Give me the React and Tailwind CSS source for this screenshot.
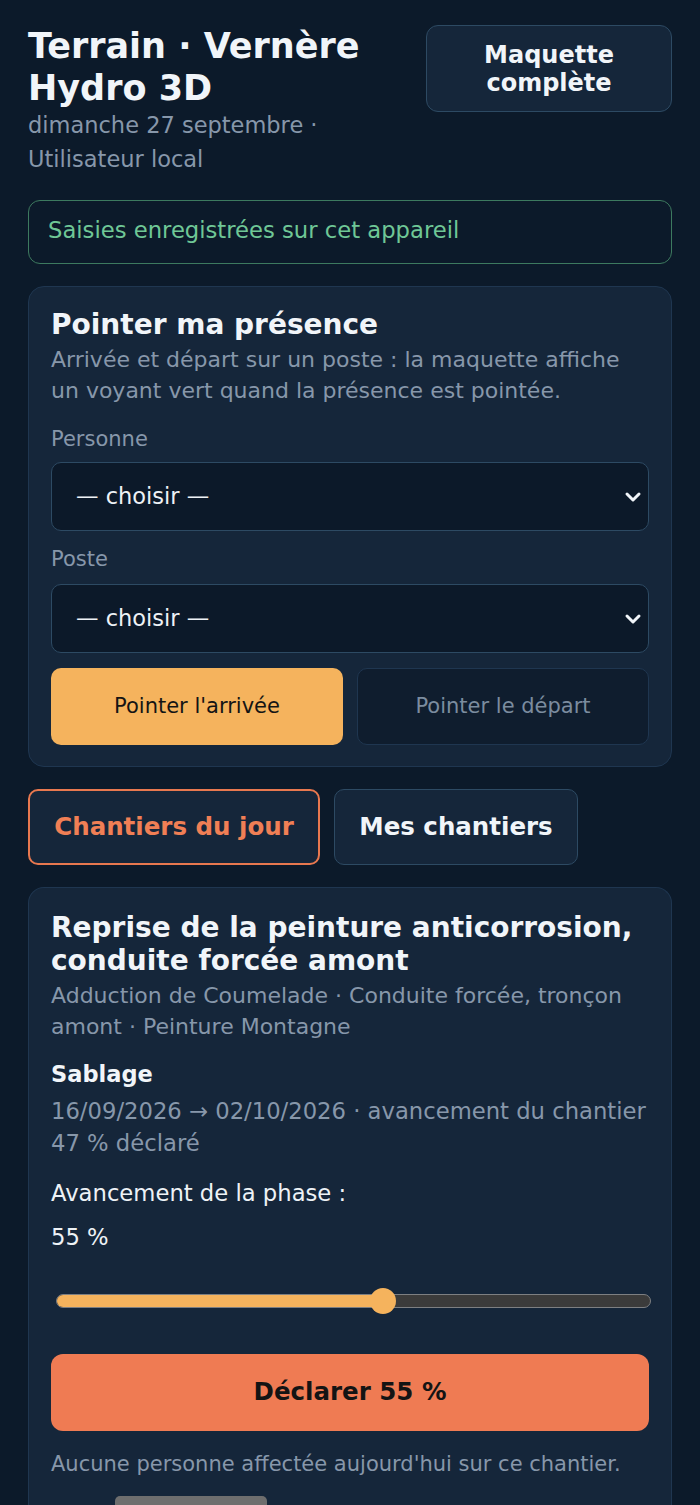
export default function App() {
  const font = { fontFamily: '"DejaVu Sans", Verdana, sans-serif' };
  return (
    <div style={font} className="min-h-[1505px] bg-[#0c1a2a] px-7 pt-[25px] pb-10 text-[#eef2f6]">
      {/* Header */}
      <div className="flex items-start justify-between gap-4">
        <div>
          <h1 className="text-[35px] font-bold leading-[42px] text-[#f1f5f9]">
            Terrain · Vernère
            <br />
            Hydro 3D
          </h1>
          <p className="mt-[-1px] text-[22.5px] leading-[34px] text-[#8797aa]">
            dimanche 27 septembre ·
            <br />
            Utilisateur local
          </p>
        </div>
        <button className="flex h-[87px] w-[246px] shrink-0 items-center justify-center rounded-[12px] border-[1.5px] border-[#2d4a63] bg-[#15263a] text-center text-[24px] font-bold leading-[28px] text-[#f1f5f9]">
          Maquette
          <br />
          complète
        </button>
      </div>

      {/* Status */}
      <div className="mt-[24px] flex h-[64px] items-center rounded-[12px] border-[1.5px] border-[#3d7a5f] px-[19px] pb-[3px] text-[22.7px] text-[#6fc796]">
        Saisies enregistrées sur cet appareil
      </div>

      {/* Pointer card */}
      <div className="mt-[22px] rounded-[16px] border-[1.5px] border-[#1f3650] bg-[#15263a] px-[22px] pt-[19px] pb-[21px]">
        <h2 className="text-[28px] font-bold leading-[38px] text-[#f1f5f9]">Pointer ma présence</h2>
        <p className="text-[22px] leading-[31px] text-[#8797aa]">
          Arrivée et départ sur un poste : la maquette affiche un voyant vert quand la présence est pointée.
        </p>
        <div className="mt-[19px] text-[21px] leading-[28px] text-[#8797aa]">Personne</div>
        <Select className="mt-[9px]" />
        <div className="mt-[14px] text-[21px] leading-[28px] text-[#8797aa]">Poste</div>
        <Select className="mt-[11px]" />
        <div className="mt-[15px] grid grid-cols-2 gap-[14px]">
          <button className="h-[77px] rounded-[10px] bg-[#f5b35d] text-[21px] text-[#141414]">Pointer l'arrivée</button>
          <button className="h-[77px] rounded-[10px] border-[1.5px] border-[#1f3650] bg-[#0f1d2e] text-[21px] text-[#7b8c9f]">
            Pointer le départ
          </button>
        </div>
      </div>

      {/* Tabs */}
      <div className="mt-[22px] flex gap-[14px]">
        <button className="h-[76px] w-[292px] rounded-[10px] border-2 border-[#e8784f] bg-[#15263a] text-[24.5px] font-bold text-[#f07f55]">
          Chantiers du jour
        </button>
        <button className="h-[76px] w-[244px] rounded-[10px] border-[1.5px] border-[#2d4a63] bg-[#15263a] text-[24.5px] font-bold text-[#f1f5f9]">
          Mes chantiers
        </button>
      </div>

      {/* Chantier card */}
      <div className="mt-[22px] rounded-t-[16px] border-[1.5px] border-b-0 border-[#1f3650] bg-[#15263a] px-[22px] pt-[23px] pb-10">
        <h2 className="text-[28px] font-bold leading-[33px] text-[#f1f5f9]">
          Reprise de la peinture anticorrosion, conduite forcée amont
        </h2>
        <p className="mt-[3px] text-[22px] leading-[31px] text-[#8797aa]">
          Adduction de Coumelade · Conduite forcée, tronçon amont · Peinture Montagne
        </p>
        <div className="mt-[17px] text-[22.5px] font-bold leading-[31px] text-[#f1f5f9]">Sablage</div>
        <p className="mt-[5px] text-[22.7px] leading-[32px] text-[#8797aa]">
          16/09/2026 → 02/10/2026 · avancement du chantier 47 % déclaré
        </p>
        <div className="mt-[18px] text-[22.7px] leading-[32px] text-[#eef2f6]">Avancement de la phase :</div>
        <div className="mt-[12px] text-[22.7px] leading-[32px] text-[#eef2f6]">55 %</div>

        {/* Slider */}
        <div className="mt-[41px] -mr-[2px] ml-[5px]">
          <div className="relative h-[14px] rounded-full border-[1.5px] border-[#7d7f82] bg-[#3b3b3b]">
            <div className="h-full w-[55%] rounded-full bg-[#f5b35d]" />
            <div className="absolute top-1/2 left-[55%] h-[26px] w-[26px] -translate-x-1/2 -translate-y-1/2 rounded-full bg-[#f5b35d]" />
          </div>
        </div>

        <button className="mt-[46px] h-[77px] w-full rounded-[12px] bg-[#ef7b53] text-[24.5px] font-bold text-[#141414]">
          Déclarer 55 %
        </button>
        <p className="mt-[17px] text-[21px] leading-[32px] text-[#8797aa]">
          Aucune personne affectée aujourd'hui sur ce chantier.
        </p>
        <div className="mt-[16px] ml-[64px] h-[40px] w-[152px] rounded-[5px] bg-[#6e6e6e]" />
      </div>
    </div>
  );
}

function Select({ className = "" }) {
  return (
    <div
      className={`flex h-[69px] items-center justify-between rounded-[10px] border-[1.5px] border-[#2d4a63] bg-[#0c1929] pr-[6px] pl-[24px] text-[22.5px] text-[#eef2f6] ${className}`}
    >
      <span>— choisir —</span>
      <svg width="18" height="18" viewBox="0 0 18 18" fill="none">
        <path d="M3 6l6 6 6-6" stroke="#f1f5f9" strokeWidth="3" strokeLinecap="round" strokeLinejoin="round" />
      </svg>
    </div>
  );
}
